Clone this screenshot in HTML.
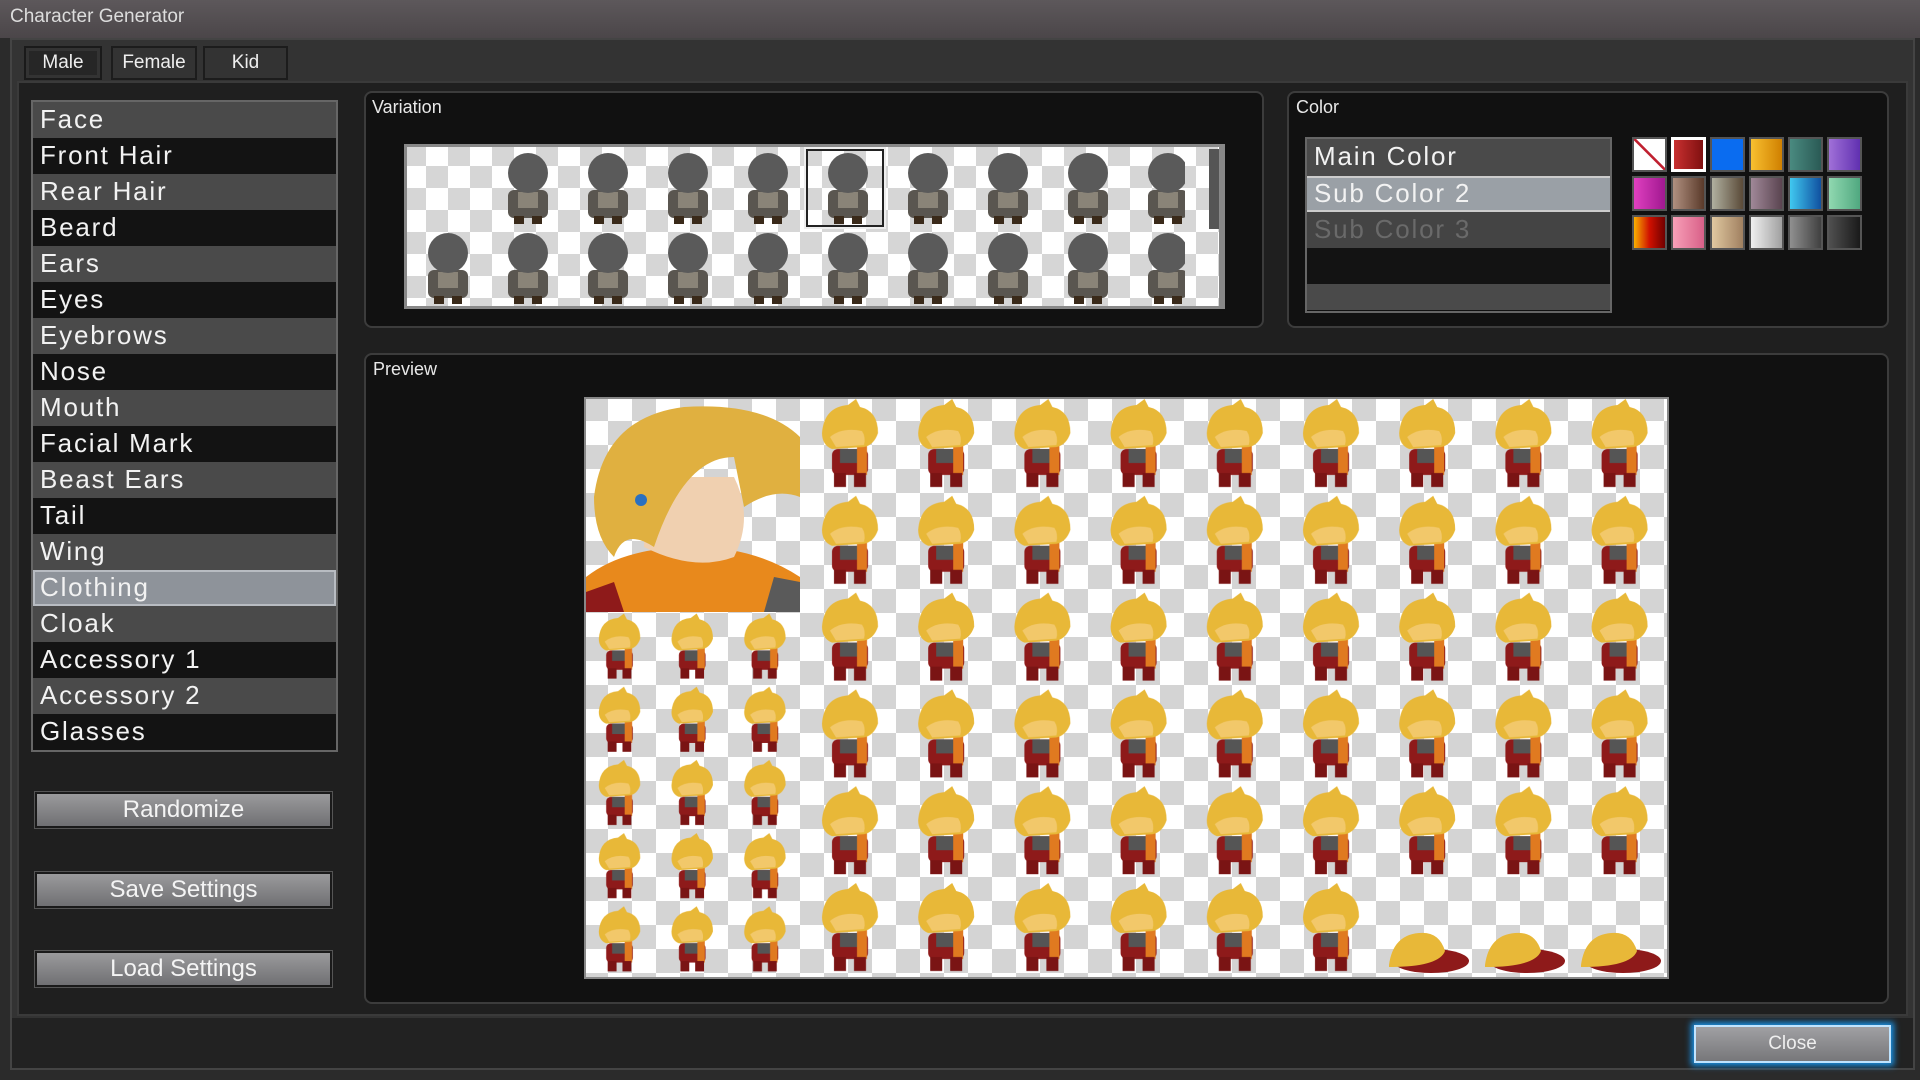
<!DOCTYPE html>
<html><head><meta charset="utf-8"><style>
*{margin:0;padding:0;box-sizing:border-box}
body{width:1920px;height:1080px;background:#2b2b2b;font-family:"Liberation Sans",sans-serif;color:#e8e8e8;position:relative;overflow:hidden}
.abs{position:absolute}
.title{left:0;top:0;width:1920px;height:38px;background:linear-gradient(#5d585b,#4b4649);}
.title span{position:absolute;left:10px;top:6px;font-size:19px;color:#ddd}
.frame{left:10px;top:38px;width:1905px;height:1032px;border:2px solid #444;background:#333}
.tab{top:46px;height:34px;background:#333;border:2px solid #1c1c1c;font-size:19px;text-align:center;line-height:30px;color:#eee}
.main{left:17px;top:81px;width:1891px;height:935px;background:#1f1f1f;border:2px solid #3a3a3a}
.bottom{left:12px;top:1016px;width:1901px;height:52px;background:#222;border-top:2px solid #333}
.list{left:31px;top:100px;width:307px;height:652px;border:2px solid #666;background:#111}
.row{height:36px;font-size:26px;letter-spacing:1.8px;padding-left:7px;line-height:35px;color:#f2f2f2}
.g{background:#4a4a4a}.b{background:#131313}
.sel{background:#8e939a;border:2px solid #b8bcc2;line-height:31px;padding-left:5px}
.btn{left:35px;width:297px;height:36px;background:linear-gradient(#9a9a9c,#707073);border:2px solid #1a1a1a;outline:1px solid #555;font-size:24px;text-align:center;line-height:31px;color:#f4f4f4}
.panel{background:#111;border:2px solid #3c3c3c;border-radius:8px}
.ptitle{font-size:18px;color:#e8e8e8}
.sw{width:35px;height:35px;border:2px solid #555}
.close{left:1694px;top:1025px;width:197px;height:38px;background:linear-gradient(#a0a0a3,#77777a);border:2px solid #bfe4ff;box-shadow:0 0 6px 3px #1a8fe0;font-size:19px;text-align:center;line-height:33px;color:#eee}
</style></head><body>
<div class="abs title"><span>Character Generator</span></div>
<div class="abs frame"></div>
<div class="abs tab" style="left:24px;width:78px;background:#262626;border-color:#1a1a1a;box-shadow:inset 0 0 0 3px #333">Male</div>
<div class="abs tab" style="left:111px;width:86px">Female</div>
<div class="abs tab" style="left:203px;width:85px">Kid</div>
<div class="abs main"></div>
<div class="abs bottom"></div>

<div class="abs list">
<div class="row g">Face</div><div class="row b">Front Hair</div><div class="row g">Rear Hair</div><div class="row b">Beard</div>
<div class="row g">Ears</div><div class="row b">Eyes</div><div class="row g">Eyebrows</div><div class="row b">Nose</div>
<div class="row g">Mouth</div><div class="row b">Facial Mark</div><div class="row g">Beast Ears</div><div class="row b">Tail</div>
<div class="row g">Wing</div><div class="row sel">Clothing</div><div class="row g">Cloak</div><div class="row b">Accessory 1</div>
<div class="row g">Accessory 2</div><div class="row b">Glasses</div>
</div>
<div class="abs btn" style="top:792px">Randomize</div>
<div class="abs btn" style="top:872px">Save Settings</div>
<div class="abs btn" style="top:951px">Load Settings</div>

<div class="abs panel" style="left:364px;top:91px;width:900px;height:237px"></div>
<div class="abs ptitle" style="left:372px;top:97px">Variation</div>
<svg class="abs" style="left:404px;top:144px" width="821" height="165">
<defs>
<pattern id="ck" width="44" height="44" patternUnits="userSpaceOnUse"><rect width="44" height="44" fill="#fff"/><rect width="22" height="22" fill="#d6d6d6"/><rect x="22" y="22" width="22" height="22" fill="#d6d6d6"/></pattern>
<pattern id="vc" width="80" height="80" patternUnits="userSpaceOnUse" x="4" y="2">
<rect x="20" y="44" width="40" height="28" rx="6" fill="#5a5650"/><rect x="30" y="46" width="20" height="16" fill="#8a8478"/><rect x="26" y="70" width="10" height="8" fill="#3a2a1a"/><rect x="44" y="70" width="10" height="8" fill="#3a2a1a"/>
<circle cx="40" cy="27" r="20" fill="#5a5a5a"/></pattern>
</defs>
<rect width="821" height="165" fill="#888"/>
<rect x="3" y="3" width="812" height="159" fill="url(#ck)"/>
<rect x="4" y="3" width="800" height="159" fill="url(#vc)"/>
<rect x="4" y="3" width="78" height="78" fill="url(#ck)"/>
<rect x="781" y="3" width="30" height="159" fill="url(#ck)"/>
<rect x="805" y="5" width="10" height="80" fill="#555"/>
<rect x="403" y="6" width="76" height="76" fill="none" stroke="#222" stroke-width="2"/>
<rect x="401" y="4" width="80" height="80" fill="none" stroke="#eee" stroke-width="2"/>
</svg>

<div class="abs panel" style="left:1287px;top:91px;width:602px;height:237px"></div>
<div class="abs ptitle" style="left:1296px;top:97px">Color</div>
<div class="abs" style="left:1305px;top:137px;width:307px;height:176px;border:2px solid #666;background:#111">
<div class="row g" style="height:37px">Main Color</div>
<div class="row" style="background:#9aa0a6;border-top:2px solid #ccc;border-bottom:2px solid #ccc;line-height:31px">Sub Color 2</div>
<div class="row g" style="color:#6a6a6a;background:#444">Sub Color 3</div>
<div class="row b"></div>
<div class="row g" style="height:26px"></div>
</div>
<div class="abs sw" style="left:1632px;top:137px;background:linear-gradient(to top right,#fff 47%,#c02030 48%,#c02030 53%,#fff 54%)"></div>
<div class="abs sw" style="left:1671px;top:137px;background:linear-gradient(90deg,#c83030,#801010);border:3px solid #fff"></div>
<div class="abs sw" style="left:1710px;top:137px;background:#0a6cf0"></div>
<div class="abs sw" style="left:1749px;top:137px;background:linear-gradient(90deg,#f8c030,#d08000)"></div>
<div class="abs sw" style="left:1788px;top:137px;background:linear-gradient(90deg,#4a8a80,#2a5a55)"></div>
<div class="abs sw" style="left:1827px;top:137px;background:linear-gradient(90deg,#a070d8,#6030b0)"></div>
<div class="abs sw" style="left:1632px;top:176px;background:linear-gradient(90deg,#e040c0,#a01890)"></div>
<div class="abs sw" style="left:1671px;top:176px;background:linear-gradient(90deg,#b09080,#5a3a2a)"></div>
<div class="abs sw" style="left:1710px;top:176px;background:linear-gradient(90deg,#b0b0a0,#5a4a38)"></div>
<div class="abs sw" style="left:1749px;top:176px;background:linear-gradient(90deg,#a08898,#5a4450)"></div>
<div class="abs sw" style="left:1788px;top:176px;background:linear-gradient(90deg,#40c8f0,#1050a0)"></div>
<div class="abs sw" style="left:1827px;top:176px;background:linear-gradient(90deg,#90d8b0,#50a880)"></div>
<div class="abs sw" style="left:1632px;top:215px;background:linear-gradient(90deg,#f8b000,#d01000,#700000)"></div>
<div class="abs sw" style="left:1671px;top:215px;background:linear-gradient(90deg,#f8a0b8,#d86088)"></div>
<div class="abs sw" style="left:1710px;top:215px;background:linear-gradient(90deg,#e0c8a0,#a08060)"></div>
<div class="abs sw" style="left:1749px;top:215px;background:linear-gradient(90deg,#f0f0f0,#a0a0a0)"></div>
<div class="abs sw" style="left:1788px;top:215px;background:linear-gradient(90deg,#909090,#404040)"></div>
<div class="abs sw" style="left:1827px;top:215px;background:linear-gradient(90deg,#505050,#1a1a1a)"></div>

<div class="abs panel" style="left:364px;top:353px;width:1525px;height:651px"></div>
<div class="abs ptitle" style="left:373px;top:359px">Preview</div>
<svg class="abs" style="left:584px;top:397px" width="1085" height="582">
<defs>
<pattern id="ck2" width="48" height="48" patternUnits="userSpaceOnUse"><rect width="48" height="48" fill="#fff"/><rect width="24" height="24" fill="#d4d4d4"/><rect x="24" y="24" width="24" height="24" fill="#d4d4d4"/></pattern>
<g id="spr">
<rect x="30" y="52" width="36" height="26" rx="6" fill="#8e1a1a"/>
<rect x="38" y="52" width="20" height="14" fill="#555"/>
<rect x="55" y="48" width="10" height="30" fill="#e07a20"/>
<rect x="32" y="76" width="12" height="14" fill="#7a1414"/><rect x="52" y="76" width="12" height="14" fill="#7a1414"/>
<path d="M20 36 Q22 10 46 8 L54 2 L58 10 Q76 14 76 36 Q72 48 62 50 L30 52 Q20 48 20 36Z" fill="#e8b838"/>
<path d="M28 40 Q40 30 60 34 Q64 40 62 48 L34 50Z" fill="#f2c86a"/>
</g>
<g id="lie">
<ellipse cx="52" cy="80" rx="38" ry="12" fill="#8e1a1a"/>
<path d="M10 84 Q14 54 40 52 Q60 50 66 70 Q60 86 10 86Z" fill="#e8b838"/>
</g>
<pattern id="sp" width="96.2" height="96.8" patternUnits="userSpaceOnUse" x="218" y="0"><use href="#spr"/></pattern>
<pattern id="sps" width="72.7" height="73.2" patternUnits="userSpaceOnUse" x="0" y="215"><use href="#spr" transform="scale(0.74)"/></pattern>
</defs>
<rect width="1085" height="582" fill="#888"/>
<rect x="2" y="2" width="1081" height="578" fill="url(#ck2)"/>
<rect x="218" y="2" width="865" height="578" fill="url(#sp)"/>
<rect x="2" y="215" width="216" height="365" fill="url(#sps)"/>
<rect x="795" y="484" width="288" height="96" fill="url(#ck2)"/>
<use href="#lie" x="795" y="484"/><use href="#lie" x="891" y="484"/><use href="#lie" x="987" y="484"/>
<g>
<path d="M2 215 L2 180 Q40 150 110 150 Q170 150 216 180 L216 215Z" fill="#e8891c"/>
<path d="M2 215 L2 195 L30 185 L40 215Z" fill="#8e1a1a"/>
<path d="M180 215 L190 180 L216 185 L216 215Z" fill="#5a5a5a"/>
<path d="M60 150 Q60 110 90 80 L150 80 Q170 120 150 160 Q110 175 60 150Z" fill="#f0d0b0"/>
<path d="M10 100 Q20 20 100 10 Q180 5 216 40 L216 100 Q190 90 160 110 L150 60 Q100 60 70 150 Q40 130 30 160 Q10 140 10 100Z" fill="#e0b040"/>
<circle cx="57" cy="103" r="6" fill="#2a70c0"/>
</g>
</svg>

<div class="abs close">Close</div>
</body></html>
